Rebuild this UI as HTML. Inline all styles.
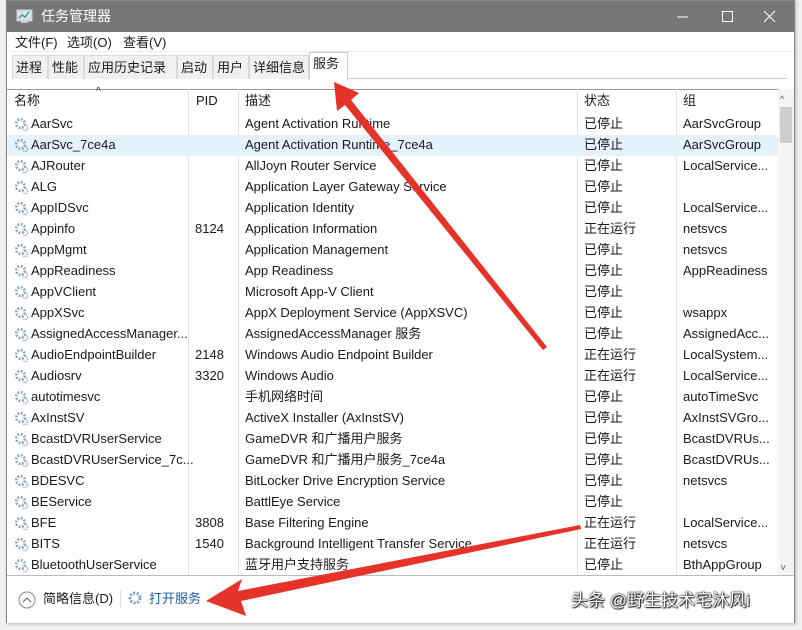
<!DOCTYPE html>
<html><head><meta charset="utf-8"><style>
*{margin:0;padding:0;box-sizing:border-box}
body{width:802px;height:630px;background:#f0f0f0;position:relative;overflow:hidden;font-family:"Liberation Sans","Noto Sans CJK SC",sans-serif;font-size:13px;line-height:16px;color:#1a1a1a}
.win{position:absolute;left:6px;top:0;width:789px;height:623px;background:#fff;border:1px solid #888;box-shadow:1px 1px 3px rgba(0,0,0,.25)}
.title{position:absolute;left:0;top:0;width:100%;height:31px;background:#777;color:#fff;font-size:14px;line-height:18px}
.title .t{position:absolute;left:34px;top:6px}
.menu{position:absolute;top:31px;left:0;width:100%;height:20px;border-bottom:1px solid #eee}
.menu span{position:absolute;top:3px}
.tabs{position:absolute;top:54px;left:5px;height:24px;width:775px;border-bottom:1px solid #ccc}
.tab{position:absolute;top:0;height:24px;background:#f0f0f0;border:1px solid #d9d9d9;border-bottom:none;padding:4px 3px 0 3px}
.tab.a{background:#fff;top:-3px;height:28px;border-color:#ccc;padding-top:3px}
.hdr{position:absolute;top:88px;left:0;width:771px;height:23px;border-top:1px solid #999}
.row{position:absolute;left:0;width:771px;height:21px}
.c{position:absolute;top:2px;white-space:nowrap;line-height:16px;height:16px}
.sep{position:absolute;top:88px;width:1px;height:486px;background:#e3e3e3}
.sb{position:absolute;left:771px;top:88px;width:16px;height:486px;background:#f4f4f4}
.foot{position:absolute;left:0;top:574px;width:100%;height:48px;border-top:1px solid #bbb;background:#fff}
.gear{position:absolute;left:7px;top:3px;width:15px;height:15px}
</style></head><body>
<div class="win">
<div class="title"><svg style="position:absolute;left:9px;top:8px" width="18" height="15"><rect x="1" y="1" width="15" height="11" fill="#dde" stroke="#ccd"/><polyline points="3,9 6,6 9,8 13,3" fill="none" stroke="#2a7" stroke-width="1.3"/><rect x="5" y="12" width="7" height="2" fill="#ccc"/></svg><span class="t">任务管理器</span>
<svg style="position:absolute;left:670px;top:9px" width="110" height="14"><line x1="0" y1="7" x2="11" y2="7" stroke="#fff"/><rect x="45.5" y="1.5" width="10" height="10" fill="none" stroke="#fff"/><path d="M87 1l11 11M98 1L87 12" stroke="#fff"/></svg></div>
<div class="menu"><span style="left:8px">文件(F)</span><span style="left:60px">选项(O)</span><span style="left:116px">查看(V)</span></div>
<div class="tabs">
<div class="tab" style="left:0;width:36px">进程</div>
<div class="tab" style="left:36px;width:36px">性能</div>
<div class="tab" style="left:72px;width:93px">应用历史记录</div>
<div class="tab" style="left:165px;width:36px">启动</div>
<div class="tab" style="left:201px;width:36px">用户</div>
<div class="tab" style="left:237px;width:60px">详细信息</div>
<div class="tab a" style="left:297px;width:39px">服务</div>
</div>
<div class="hdr"><span class="c" style="left:7px;top:3px">名称</span><span class="c" style="left:89px;top:-6px;font-size:10px">^</span><span class="c" style="left:189px;top:3px">PID</span><span class="c" style="left:238px;top:3px">描述</span><span class="c" style="left:577px;top:3px">状态</span><span class="c" style="left:676px;top:3px">组</span></div>
<div class="sep" style="left:181px"></div><div class="sep" style="left:231px"></div><div class="sep" style="left:570px"></div><div class="sep" style="left:669px"></div>
<div class="sb"><div style="position:absolute;left:2px;top:2px;font-size:9px;color:#555">^</div><div style="position:absolute;left:2px;top:18px;width:12px;height:36px;background:#cdcdcd"></div><div style="position:absolute;left:3px;top:470px;font-size:9px;color:#555">v</div></div>
<div id="rows"></div>
<div class="foot">
<svg style="position:absolute;left:11px;top:15px" width="18" height="18"><circle cx="9" cy="9" r="8" fill="none" stroke="#888"/><polyline points="5,11 9,7 13,11" fill="none" stroke="#666"/></svg>
<span style="position:absolute;left:36px;top:15px">简略信息(D)</span>
<div style="position:absolute;left:113px;top:14px;width:1px;height:18px;background:#ddd"></div>
<svg style="position:absolute;left:120px;top:14px" width="18" height="18"><circle cx="8" cy="8" r="5" fill="none" stroke="#7a9ab8" stroke-width="3" stroke-dasharray="2 1.6"/><circle cx="8" cy="8" r="2" fill="#fff"/></svg>
<span style="position:absolute;left:142px;top:15px;color:#1a5fa8">打开服务</span>
</div>
</div>
<div style="position:absolute;left:571px;top:590px;color:#fff;font-size:17px;line-height:22px;text-shadow:0 0 2px #000,0 0 1px #000,1px 1px 1px #333">头条 @野生技术宅沐风i</div>
<svg style="position:absolute;left:0;top:0" width="802" height="630">
<polygon points="334,82 359,93 351,100 547,347 543,350 345,105 337,111" fill="#e5332a"/>
<polygon points="206,601 242,579 238,591 580,525 581,529 241,601 246,616" fill="#e5332a"/>
</svg>
<script>
var d=[["AarSvc","","Agent Activation Runtime","已停止","AarSvcGroup"],["AarSvc_7ce4a","","Agent Activation Runtime_7ce4a","已停止","AarSvcGroup"],["AJRouter","","AllJoyn Router Service","已停止","LocalService..."],["ALG","","Application Layer Gateway Service","已停止",""],["AppIDSvc","","Application Identity","已停止","LocalService..."],["Appinfo","8124","Application Information","正在运行","netsvcs"],["AppMgmt","","Application Management","已停止","netsvcs"],["AppReadiness","","App Readiness","已停止","AppReadiness"],["AppVClient","","Microsoft App-V Client","已停止",""],["AppXSvc","","AppX Deployment Service (AppXSVC)","已停止","wsappx"],["AssignedAccessManager...","","AssignedAccessManager 服务","已停止","AssignedAcc..."],["AudioEndpointBuilder","2148","Windows Audio Endpoint Builder","正在运行","LocalSystem..."],["Audiosrv","3320","Windows Audio","正在运行","LocalService..."],["autotimesvc","","手机网络时间","已停止","autoTimeSvc"],["AxInstSV","","ActiveX Installer (AxInstSV)","已停止","AxInstSVGro..."],["BcastDVRUserService","","GameDVR 和广播用户服务","已停止","BcastDVRUs..."],["BcastDVRUserService_7c...","","GameDVR 和广播用户服务_7ce4a","已停止","BcastDVRUs..."],["BDESVC","","BitLocker Drive Encryption Service","已停止","netsvcs"],["BEService","","BattlEye Service","已停止",""],["BFE","3808","Base Filtering Engine","正在运行","LocalService..."],["BITS","1540","Background Intelligent Transfer Service","正在运行","netsvcs"],["BluetoothUserService","","蓝牙用户支持服务","已停止","BthAppGroup"]];
var h="";d.forEach(function(r,i){h+='<div class="row" style="top:'+(113+i*21)+'px;'+(i==1?'background:#e5f1fb':'')+'"><svg class="gear" viewBox="0 0 15 15"><circle cx="6.5" cy="6.5" r="4.3" fill="none" stroke="#8aa2b8" stroke-width="2.6" stroke-dasharray="1.8 1.6"/><circle cx="6.5" cy="6.5" r="1.8" fill="#fff"/><circle cx="11" cy="11" r="2.6" fill="none" stroke="#9aaabb" stroke-width="1.5" stroke-dasharray="1.2 1"/></svg><span class="c" style="left:24px">'+r[0]+'</span><span class="c" style="left:188px">'+r[1]+'</span><span class="c" style="left:238px">'+r[2]+'</span><span class="c" style="left:577px">'+r[3]+'</span><span class="c" style="left:676px">'+r[4]+'</span></div>'});
document.getElementById("rows").innerHTML=h;
</script>
</body></html>
